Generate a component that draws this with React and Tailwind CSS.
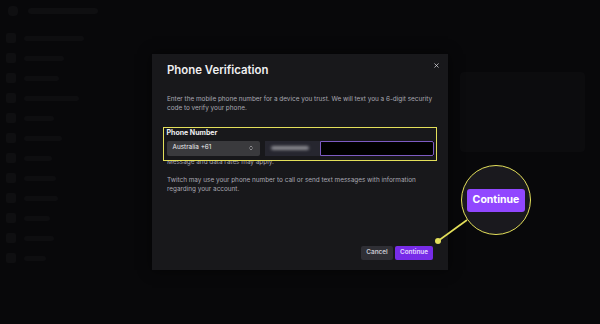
import { X, ChevronsUpDown } from "lucide-react";

const SideRow = ({ w }) => (
  <div className="flex items-center gap-[8px] h-[20px]">
    <div className="w-[10px] h-[10px] rounded-[2px] bg-[#0f0f11]" />
    <div className="h-[5px] rounded-sm bg-[#0e0e10]" style={{ width: w }} />
  </div>
);

const Background = () => (
  <div className="absolute inset-0 flex flex-col bg-[#08080a]">
    <div className="h-[22px] flex items-center px-[8px] gap-[10px]">
      <div className="w-[10px] h-[10px] rounded-sm bg-[#0f0f11]" />
      <div className="w-[70px] h-[6px] rounded-sm bg-[#0f0f11]" />
    </div>
    <div className="flex flex-1">
      <div className="w-[130px] flex flex-col px-[6px] pt-[6px]">
        <SideRow w={60} />
        <SideRow w={40} />
        <SideRow w={35} />
        <SideRow w={55} />
        <SideRow w={30} />
        <SideRow w={38} />
        <SideRow w={28} />
        <SideRow w={32} />
        <SideRow w={34} />
        <SideRow w={26} />
        <SideRow w={30} />
        <SideRow w={22} />
      </div>
      <div className="flex-1" />
      <div className="w-[140px] pt-[50px] pr-[15px]">
        <div className="h-[80px] rounded-sm bg-[#0c0c0e]" />
      </div>
    </div>
  </div>
);

export default function App() {
  return (
    <div
      className="relative w-[600px] h-[324px] overflow-hidden flex items-center justify-center"
      style={{ fontFamily: "Inter, 'Noto Sans', sans-serif" }}
    >
      <Background />

      <div className="relative z-10 w-[296px] h-[216px] bg-[#18181b] px-[15px] pt-[9px] pb-[10px] flex flex-col shadow-[0_0_12px_rgba(0,0,0,0.6)]">
        <button className="absolute right-[8px] top-[8px] text-[#dedee3]">
          <X size={7} strokeWidth={2.5} />
        </button>

        <h2 className="text-[11.4px] leading-[15px] font-semibold text-[#efeff1]">
          Phone Verification
        </h2>

        <p className="mt-[17px] text-[6.4px] leading-[9px] text-[#a8a8b2] whitespace-nowrap">
          Enter the mobile phone number for a device you trust. We will text you a 6-digit security
          <br />
          code to verify your phone.
        </p>

        <div className="relative z-10 mt-[14px] -mx-[4px] border-[1.5px] border-[#e3df5a] bg-[#18181b] px-[2.5px] pb-[4.5px]">
          <div className="text-[7px] leading-[9px] font-bold text-[#efeff1]">Phone Number</div>
          <div className="mt-[3.5px] flex gap-[5px] h-[15px]">
            <div className="w-[93px] bg-[#3a3a3d] rounded-[2px] flex items-center justify-between px-[6px]">
              <span className="text-[6.4px] text-[#efeff1]">Australia +61</span>
              <ChevronsUpDown size={6} className="text-[#dedee3]" strokeWidth={2} />
            </div>
            <div className="flex-1 flex bg-black">
              <div className="w-[55px] h-full bg-[#26262f] flex items-center pl-[6px]">
                <div className="w-[38px] h-[4px] rounded bg-[#8a8a90] blur-[1.5px]" />
              </div>
              <div className="flex-1 border border-[#7d5bc2] rounded-r-[2px] bg-black" />
            </div>
          </div>
        </div>

        <p className="-mt-[3.5px] text-[6.4px] leading-[9px] text-[#a8a8b2]">
          Message and data rates may apply.
        </p>

        <p className="mt-[9px] text-[6.4px] leading-[9px] text-[#a8a8b2]">
          Twitch may use your phone number to call or send text messages with information
          <br />
          regarding your account.
        </p>

        <div className="mt-auto flex justify-end gap-[2px]">
          <button className="w-[32px] h-[14px] rounded-[2px] bg-[#2f2f35] text-[6.4px] font-semibold text-[#c8c8d0]">
            Cancel
          </button>
          <button className="w-[38px] h-[14px] rounded-[2px] bg-[#772ce8] text-[6.4px] font-semibold text-[#e6dcff]">
            Continue
          </button>
        </div>
      </div>

      <svg className="absolute inset-0 z-20 pointer-events-none" width="600" height="324">
        <line x1="438" y1="241" x2="467" y2="220" stroke="#e3df5a" strokeWidth="1.6" />
        <circle cx="438" cy="241" r="3" fill="#e3df5a" />
      </svg>

      <div className="absolute z-20 left-[461px] top-[165px] w-[70px] h-[70px] rounded-full border-[1.5px] border-[#e3df5a] bg-[#1a191e] flex items-center justify-center">
        <div className="w-[58px] h-[23px] rounded-[3px] bg-[#9147ff] flex items-center justify-center text-[10.5px] font-bold text-white">
          Continue
        </div>
      </div>
    </div>
  );
}
